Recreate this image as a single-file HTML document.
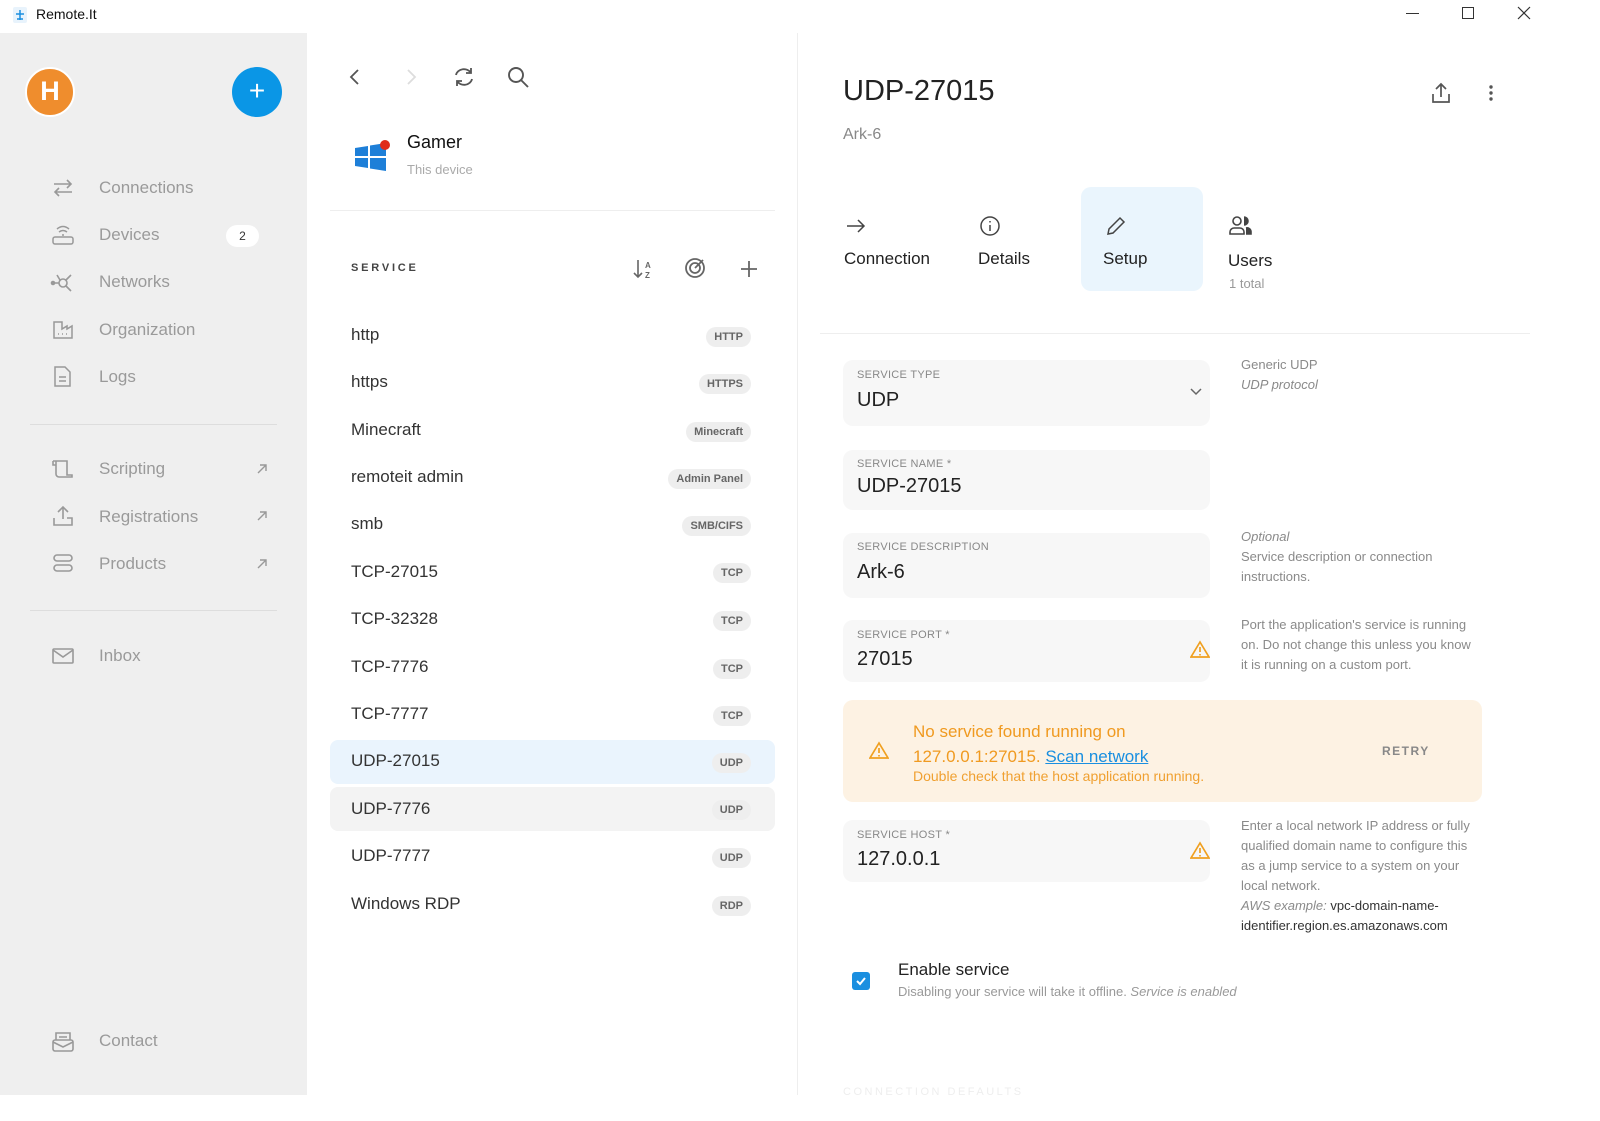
<!DOCTYPE html>
<html><head><meta charset="utf-8"><style>
*{box-sizing:border-box;margin:0;padding:0}
body{width:1600px;height:1121px;overflow:hidden;background:#fff;font-family:"Liberation Sans",sans-serif;position:relative;color:#333}
.a{position:absolute;white-space:nowrap}
.nav{color:#9a9a9a;font-size:17px}
.ic{position:absolute}
.row{position:absolute;left:330px;width:445px;height:44px;border-radius:8px}
.rt{position:absolute;left:351px;font-size:17px;color:#333;transform:translateY(-50%)}
.bd{position:absolute;right:849px;transform:translateY(-50%);background:#eee;border-radius:10px;font-size:11px;font-weight:bold;color:#666;padding:4px 8px}
.fld{position:absolute;left:843px;width:367px;background:#f7f7f7;border-radius:10px}
.fl{position:absolute;left:14px;font-size:11px;color:#888;letter-spacing:.3px}
.fv{position:absolute;left:14px;font-size:20px;color:#222}
.help{position:absolute;left:1241px;font-size:13px;color:#8a8a8a;line-height:20px}
</style></head><body>
<!-- title bar -->
<div class="a" style="left:0;top:0;width:1600px;height:33px;background:#fff"></div>
<svg class="ic" style="left:12px;top:6px" width="16" height="18"><rect x="1" y="1" width="14" height="16" rx="2" fill="#e8f3fc"/><path d="M4 8h8M8 4v10M5 13h6" stroke="#1a8fe0" stroke-width="1.5"/></svg>
<div class="a" style="left:36px;top:6px;font-size:14px;color:#111">Remote.It</div>
<div class="a" style="left:1406px;top:13px;width:13px;height:1px;background:#333"></div>
<div class="a" style="left:1462px;top:7px;width:12px;height:12px;border:1px solid #333"></div>
<svg class="ic" style="left:1517px;top:6px" width="14" height="14"><path d="M1 1L13 13M13 1L1 13" stroke="#333" stroke-width="1.2"/></svg>
<!-- sidebar -->
<div class="a" style="left:0;top:33px;width:307px;height:1062px;background:#efefef"></div>
<div class="a" style="left:25px;top:67px;width:50px;height:50px;border-radius:50%;background:#ef8d2d;border:2px solid #fff;color:#fff;font-size:27px;font-weight:bold;text-align:center;line-height:45px">H</div>
<div class="a" style="left:232px;top:67px;width:50px;height:50px;border-radius:50%;background:#0a96e6;color:#fff;font-size:28px;text-align:center;line-height:48px">+</div>
<svg class="ic" style="left:52px;top:178px" width="22" height="20" fill="none" stroke="#999" stroke-width="1.6"><path d="M2 6h17M15 2l4 4-4 4M20 14H3M7 10l-4 4 4 4"/></svg>
<div class="a nav" style="left:99px;top:178px">Connections</div>
<svg class="ic" style="left:52px;top:224px" width="22" height="22" fill="none" stroke="#999" stroke-width="1.5"><rect x="1" y="13" width="20" height="7" rx="2"/><path d="M7 8q4-3 8 0M5 5q6-5 12 0M10 11h2"/></svg>
<div class="a nav" style="left:99px;top:225px">Devices</div>
<div class="a" style="left:226px;top:225px;width:33px;height:22px;border-radius:11px;background:#fff;font-size:12px;color:#333;text-align:center;line-height:22px">2</div>
<svg class="ic" style="left:50px;top:271px" width="26" height="22" fill="none" stroke="#999" stroke-width="1.6"><circle cx="13" cy="12" r="4"/><path d="M3 12h6M16 9l5-5M16 15l5 5M10 9l-3-5"/><circle cx="3" cy="12" r="1.5" fill="#999"/></svg>
<div class="a nav" style="left:99px;top:272px">Networks</div>
<svg class="ic" style="left:53px;top:320px" width="20" height="19" fill="none" stroke="#999" stroke-width="1.5"><path d="M1 2v16h18V6l-5 3V6l-5 3V2z"/><path d="M5 14h1M9 14h1M13 14h1"/></svg>
<div class="a nav" style="left:99px;top:320px">Organization</div>
<svg class="ic" style="left:54px;top:366px" width="17" height="21" fill="none" stroke="#999" stroke-width="1.5"><path d="M1 1h10l5 5v14H1z"/><path d="M5 11h7M5 15h7"/></svg>
<div class="a nav" style="left:99px;top:367px">Logs</div>
<div class="a" style="left:30px;top:424px;width:247px;height:1px;background:#ddd"></div>
<svg class="ic" style="left:52px;top:459px" width="22" height="20" fill="none" stroke="#999" stroke-width="1.6"><path d="M1 2h14v14h5v2H7a3 3 0 0 1-3-3V2M1 2v4h3"/></svg>
<div class="a nav" style="left:99px;top:459px">Scripting</div>
<svg class="ic" style="left:52px;top:505px" width="22" height="22" fill="none" stroke="#999" stroke-width="1.6"><path d="M11 14V2M6 7l5-5 5 5M2 13v7h18v-7h-5"/></svg>
<div class="a nav" style="left:99px;top:507px">Registrations</div>
<svg class="ic" style="left:52px;top:553px" width="22" height="20" fill="none" stroke="#999" stroke-width="1.6"><rect x="2" y="2" width="18" height="6" rx="3"/><rect x="2" y="12" width="18" height="6" rx="3"/></svg>
<div class="a nav" style="left:99px;top:554px">Products</div>
<svg class="ic" style="left:256px;top:463px" width="12" height="12" fill="none" stroke="#999" stroke-width="1.4"><path d="M2 10L10 2M4 2h6v6"/></svg>
<svg class="ic" style="left:256px;top:510px" width="12" height="12" fill="none" stroke="#999" stroke-width="1.4"><path d="M2 10L10 2M4 2h6v6"/></svg>
<svg class="ic" style="left:256px;top:558px" width="12" height="12" fill="none" stroke="#999" stroke-width="1.4"><path d="M2 10L10 2M4 2h6v6"/></svg>
<div class="a" style="left:30px;top:610px;width:247px;height:1px;background:#ddd"></div>
<svg class="ic" style="left:52px;top:647px" width="22" height="18" fill="none" stroke="#999" stroke-width="1.6"><rect x="1" y="2" width="20" height="14" rx="1"/><path d="M1 3l10 7 10-7"/></svg>
<div class="a nav" style="left:99px;top:646px">Inbox</div>
<svg class="ic" style="left:52px;top:1031px" width="22" height="22" fill="none" stroke="#999" stroke-width="1.6"><rect x="1" y="9" width="20" height="11" rx="2"/><path d="M4 9V2h14v7M7 6h8M1 11l10 5 10-5"/></svg>
<div class="a nav" style="left:99px;top:1031px">Contact</div>
<!-- middle -->
<div class="a" style="left:797px;top:33px;width:1px;height:1062px;background:#eee"></div>
<svg class="ic" style="left:348px;top:68px" width="14" height="18" fill="none" stroke="#555" stroke-width="1.8"><path d="M10 2L3 9l7 7"/></svg>
<svg class="ic" style="left:404px;top:68px" width="14" height="18" fill="none" stroke="#ddd" stroke-width="1.8"><path d="M4 2l7 7-7 7"/></svg>
<svg class="ic" style="left:453px;top:66px" width="22" height="22" fill="none" stroke="#555" stroke-width="1.8"><path d="M3 9a8 7 0 0 1 15-2M18 2v5h-5M19 13a8 7 0 0 1-15 2M4 20v-5h5"/></svg>
<svg class="ic" style="left:507px;top:66px" width="23" height="23" fill="none" stroke="#555" stroke-width="1.9"><circle cx="9" cy="9" r="7"/><path d="M14 14l7 7"/></svg>
<svg class="ic" style="left:354px;top:140px" width="38" height="34"><path d="M1 8l13-2v10H1zM16 5.5l16-2.5V16H16zM1 18h13v10L1 26zM16 18h16v13l-16-2.5z" fill="#1e7fd8"/><circle cx="31" cy="5" r="5" fill="#e02b1a"/></svg>
<div class="a" style="left:407px;top:132px;font-size:18px;color:#111">Gamer</div>
<div class="a" style="left:407px;top:162px;font-size:13px;color:#aaa">This device</div>
<div class="a" style="left:330px;top:210px;width:445px;height:1px;background:#eee"></div>
<div class="a" style="left:351px;top:262px;font-size:11px;font-weight:bold;letter-spacing:2.8px;color:#444">SERVICE</div>
<svg class="ic" style="left:632px;top:258px" width="22" height="22" fill="none" stroke="#666" stroke-width="1.6"><path d="M6 2v17M2 15l4 4 4-4"/><text x="13" y="10" font-size="8" fill="#666" stroke="none" font-family="Liberation Sans" font-weight="bold">A</text><text x="13" y="20" font-size="8" fill="#666" stroke="none" font-family="Liberation Sans" font-weight="bold">Z</text></svg>
<svg class="ic" style="left:684px;top:257px" width="22" height="22" fill="none" stroke="#666" stroke-width="1.8"><circle cx="11" cy="11" r="9"/><circle cx="11" cy="11" r="5"/><path d="M11 11l8-8"/></svg>
<svg class="ic" style="left:739px;top:259px" width="20" height="20" fill="none" stroke="#666" stroke-width="1.8"><path d="M10 2v16M2 10h16"/></svg>
<div class="row" style="top:740px;background:#eaf4fd"></div>
<div class="row" style="top:787px;background:#f3f3f3"></div>
<div class="rt" style="top:335px">http</div><div class="bd" style="top:337px">HTTP</div>
<div class="rt" style="top:382px">https</div><div class="bd" style="top:384px">HTTPS</div>
<div class="rt" style="top:430px">Minecraft</div><div class="bd" style="top:432px">Minecraft</div>
<div class="rt" style="top:477px">remoteit admin</div><div class="bd" style="top:479px">Admin Panel</div>
<div class="rt" style="top:524px">smb</div><div class="bd" style="top:526px">SMB/CIFS</div>
<div class="rt" style="top:572px">TCP-27015</div><div class="bd" style="top:573px">TCP</div>
<div class="rt" style="top:619px">TCP-32328</div><div class="bd" style="top:621px">TCP</div>
<div class="rt" style="top:667px">TCP-7776</div><div class="bd" style="top:669px">TCP</div>
<div class="rt" style="top:714px">TCP-7777</div><div class="bd" style="top:716px">TCP</div>
<div class="rt" style="top:761px">UDP-27015</div><div class="bd" style="top:763px">UDP</div>
<div class="rt" style="top:809px">UDP-7776</div><div class="bd" style="top:810px">UDP</div>
<div class="rt" style="top:856px">UDP-7777</div><div class="bd" style="top:858px">UDP</div>
<div class="rt" style="top:904px">Windows RDP</div><div class="bd" style="top:906px">RDP</div>
<!-- right -->
<div class="a" style="left:843px;top:75px;font-size:29px;color:#222">UDP-27015</div>
<div class="a" style="left:843px;top:126px;font-size:16px;color:#888">Ark-6</div>
<svg class="ic" style="left:1430px;top:82px" width="22" height="22" fill="none" stroke="#555" stroke-width="1.7"><path d="M11 15V2M6 7l5-5 5 5M3 12v8h16v-8"/></svg>
<svg class="ic" style="left:1488px;top:84px" width="6" height="18" fill="#555"><circle cx="3" cy="3" r="1.7"/><circle cx="3" cy="9" r="1.7"/><circle cx="3" cy="15" r="1.7"/></svg>
<div class="a" style="left:1081px;top:187px;width:122px;height:104px;border-radius:10px;background:#eaf5fd"></div>
<svg class="ic" style="left:846px;top:218px" width="20" height="16" fill="none" stroke="#444" stroke-width="1.5"><path d="M1 8h17M12 2l6 6-6 6"/></svg>
<div class="a" style="left:844px;top:249px;font-size:17px;color:#222">Connection</div>
<svg class="ic" style="left:979px;top:215px" width="22" height="22" fill="none" stroke="#444" stroke-width="1.5"><circle cx="11" cy="11" r="9"/><path d="M11 10v6M11 6v1.5"/></svg>
<div class="a" style="left:978px;top:249px;font-size:17px;color:#222">Details</div>
<svg class="ic" style="left:1105px;top:215px" width="22" height="22" fill="none" stroke="#444" stroke-width="1.5"><path d="M3 19l1-5L15 3l4 4L8 18z"/></svg>
<div class="a" style="left:1103px;top:249px;font-size:17px;color:#222">Setup</div>
<svg class="ic" style="left:1229px;top:215px" width="24" height="22" fill="none" stroke="#444" stroke-width="1.6"><circle cx="8" cy="6" r="4"/><path d="M1 19v-2a4 4 0 0 1 4-4h6a4 4 0 0 1 4 4v2z"/><path d="M15 2a4 4 0 0 1 0 8M17 13a4 4 0 0 1 5 4v2h-5" fill="#444"/></svg>
<div class="a" style="left:1228px;top:251px;font-size:17px;color:#222">Users</div>
<div class="a" style="left:1229px;top:276px;font-size:13px;color:#999">1 total</div>
<div class="a" style="left:820px;top:333px;width:710px;height:1px;background:#eee"></div>

<div class="fld" style="top:360px;height:66px"><div class="fl" style="top:9px">SERVICE TYPE</div><div class="fv" style="top:29px">UDP</div>
<svg class="ic" style="left:347px;top:28px" width="12" height="8" fill="none" stroke="#666" stroke-width="1.5"><path d="M1 1l5 5 5-5"/></svg></div>
<div class="help" style="top:355px">Generic UDP<br><i>UDP protocol</i></div>
<div class="fld" style="top:450px;height:60px"><div class="fl" style="top:8px">SERVICE NAME *</div><div class="fv" style="top:25px">UDP-27015</div></div>
<div class="fld" style="top:533px;height:65px"><div class="fl" style="top:8px">SERVICE DESCRIPTION</div><div class="fv" style="top:28px">Ark-6</div></div>
<div class="help" style="top:527px"><i>Optional</i><br>Service description or connection<br>instructions.</div>
<div class="fld" style="top:620px;height:62px"><div class="fl" style="top:9px">SERVICE PORT *</div><div class="fv" style="top:28px">27015</div>
<svg class="ic" style="left:347px;top:20px" width="20" height="19" fill="none" stroke="#f0a020" stroke-width="1.7"><path d="M10 2L1 17h18z M10 7v5M10 14v1.5"/></svg></div>
<div class="help" style="top:615px">Port the application's service is running<br>on. Do not change this unless you know<br>it is running on a custom port.</div>
<div class="a" style="left:843px;top:700px;width:639px;height:102px;border-radius:10px;background:#fdf2e3"></div>
<svg class="ic" style="left:869px;top:741px" width="20" height="19" fill="none" stroke="#f0a020" stroke-width="1.7"><path d="M10 2L1 17h18z M10 7v5M10 14v1.5"/></svg>
<div class="a" style="left:913px;top:719px;font-size:17px;color:#f09a20;line-height:25px">No service found running on<br>127.0.0.1:27015. <span style="color:#1a8fe0;text-decoration:underline">Scan network</span></div>
<div class="a" style="left:913px;top:768px;font-size:14px;color:#f0a030">Double check that the host application running.</div>
<div class="a" style="left:1382px;top:744px;font-size:12px;font-weight:bold;letter-spacing:1.5px;color:#888">RETRY</div>
<div class="fld" style="top:820px;height:62px"><div class="fl" style="top:9px">SERVICE HOST *</div><div class="fv" style="top:28px">127.0.0.1</div>
<svg class="ic" style="left:347px;top:21px" width="20" height="19" fill="none" stroke="#f0a020" stroke-width="1.7"><path d="M10 2L1 17h18z M10 7v5M10 14v1.5"/></svg></div>
<div class="help" style="top:816px">Enter a local network IP address or fully<br>qualified domain name to configure this<br>as a jump service to a system on your<br>local network.<br><i>AWS example:</i> <span style="color:#333">vpc-domain-name-</span><br><span style="color:#333">identifier.region.es.amazonaws.com</span></div>
<div class="a" style="left:852px;top:972px;width:18px;height:18px;border-radius:3px;background:#1a8fe0"></div>
<svg class="ic" style="left:855px;top:975px" width="12" height="12" fill="none" stroke="#fff" stroke-width="2"><path d="M2 6l3 3 5-6"/></svg>
<div class="a" style="left:898px;top:960px;font-size:17px;color:#222">Enable service</div>
<div class="a" style="left:898px;top:984px;font-size:13px;color:#999">Disabling your service will take it offline. <i>Service is enabled</i></div>
<div class="a" style="left:843px;top:1086px;font-size:11px;letter-spacing:2.5px;color:#eee">CONNECTION DEFAULTS</div>
<div class="a" style="left:0;top:1095px;width:1600px;height:26px;background:#fff"></div>
</body></html>
